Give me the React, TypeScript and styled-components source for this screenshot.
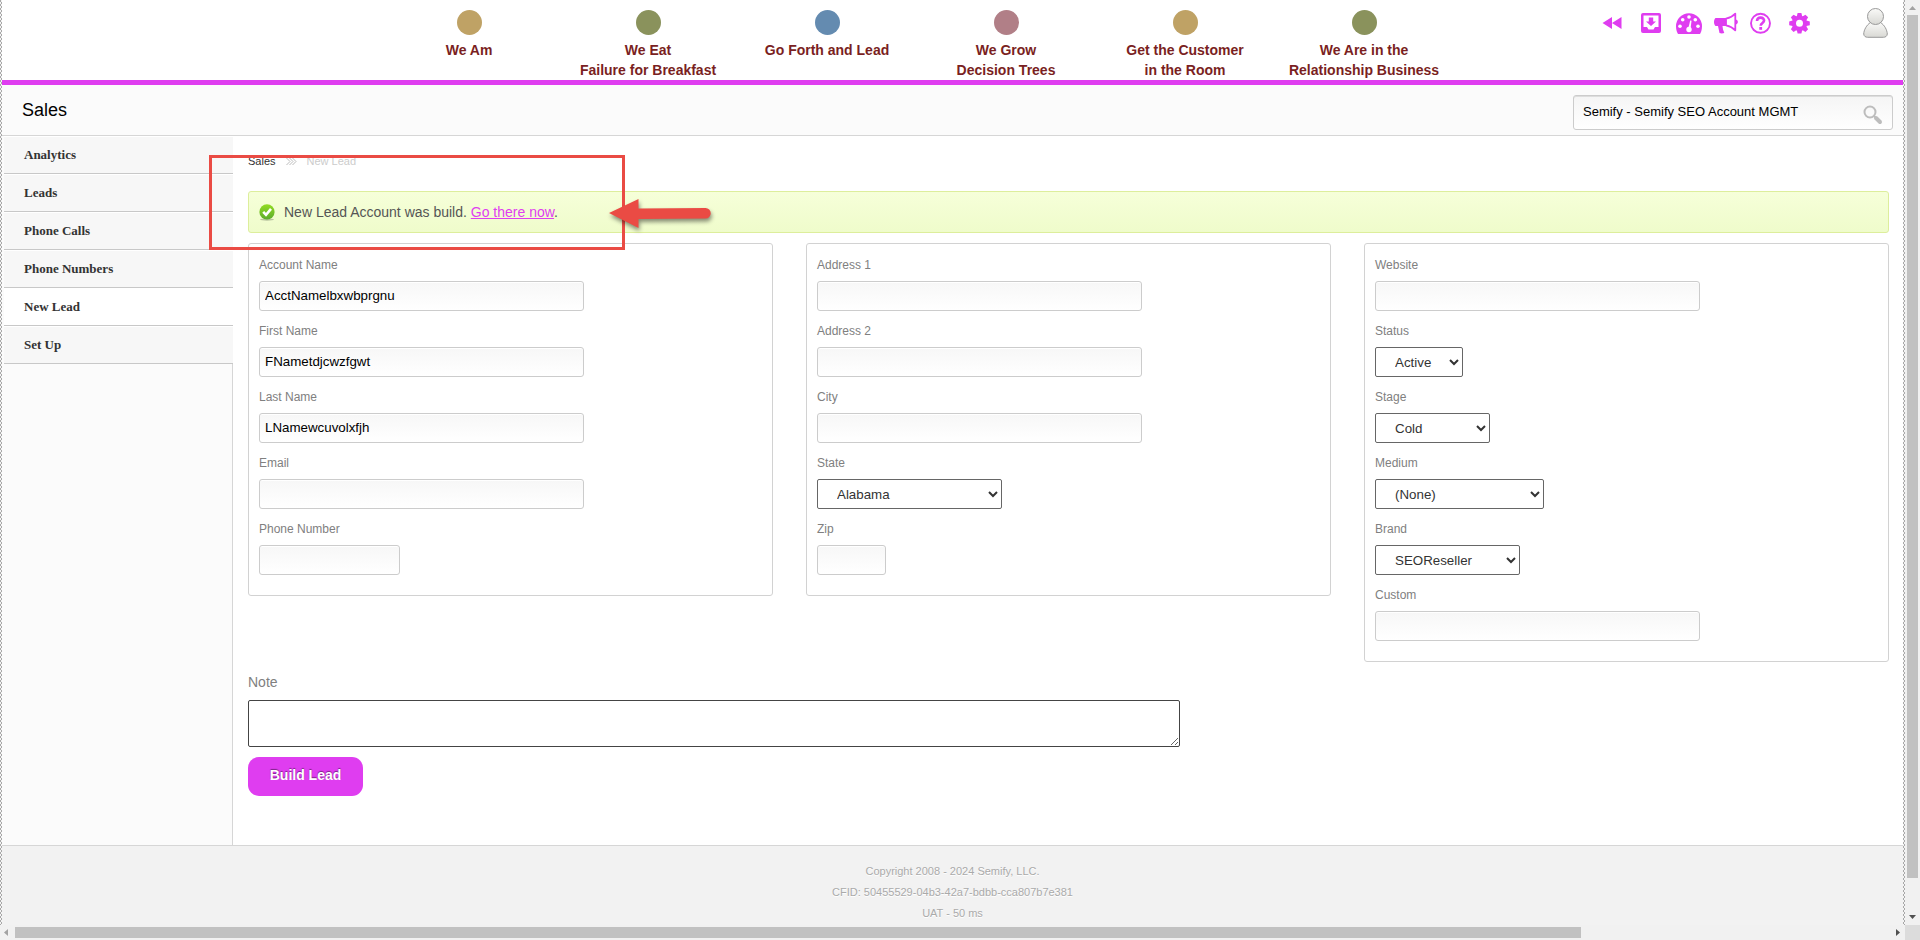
import React from "react";
import styled, { createGlobalStyle } from "styled-components";

const ACCENT = "#df3df0";
const SANS = `"Liberation Sans", Arial, Helvetica, sans-serif`;
const SERIF = `"Liberation Serif", "Times New Roman", serif`;

const GlobalStyle = createGlobalStyle`
  *, *::before, *::after { box-sizing: border-box; }
  body { margin: 0; font-family: ${SANS}; background: #fff; color: #333; }
  ul, p, h1 { margin: 0; padding: 0; }
`;

const Window = styled.div`
  position: relative;
  display: grid;
  grid-template-columns: minmax(0, 1fr) 15px;
  grid-template-rows: minmax(0, 1fr) 15px;
  min-height: 100vh;
`;

const Canvas = styled.div`
  display: flex;
  padding: 0 2px;
  background: repeating-conic-gradient(#f4f4f4 0 25%, #a8a8a8 0 50%) 0 0 / 2px 4px;
`;

const Page = styled.div`
  display: flex;
  flex: 1;
  min-width: 0;
  flex-direction: column;
  background: #fff;
`;

/* Header */

const Header = styled.header`
  display: grid;
  grid-template-columns: 21fr 1074px 25fr;
  height: 85px;
  border-bottom: 5px solid ${ACCENT};
`;

const ValueList = styled.ul`
  grid-column: 2;
  display: grid;
  grid-template-columns: repeat(6, 1fr);
  padding-top: 10px;
  list-style: none;
`;

const ValueItem = styled.li`
  display: flex;
  flex-direction: column;
  align-items: center;
  gap: 5px;
  color: #7a1f22;
  font-size: 14px;
  font-weight: bold;
  line-height: 20px;
  text-align: center;
  white-space: pre-line;
`;

const Dot = styled.span<{ $color: string }>`
  width: 25px;
  height: 25px;
  border-radius: 50%;
  background: ${(p) => p.$color};
`;

const Tools = styled.nav`
  display: flex;
  align-items: flex-start;
  justify-content: flex-end;
  padding: 8px 15px 0 0;
`;

const ToolLink = styled.a<{ $width: number; $gap: number }>`
  display: block;
  width: ${(p) => p.$width}px;
  height: 30px;
  margin-right: ${(p) => p.$gap}px;
  color: ${ACCENT};
  svg { display: block; width: 100%; height: 100%; }
`;

/* Title bar */

const TitleBar = styled.div`
  display: flex;
  align-items: center;
  justify-content: space-between;
  height: 51px;
  padding: 0 10px 0 20px;
  border-bottom: 1px solid #d6d6d6;
  background: #fbfbfb;
`;

const Title = styled.h1`
  color: #000;
  font-size: 18px;
  font-weight: normal;
`;

const SearchBox = styled.div`
  display: flex;
  align-items: flex-start;
  width: 320px;
  height: 35px;
  margin-top: 5px;
  border: 1px solid #ccc;
  border-radius: 3px;
  background: linear-gradient(#f5f5f5, #fff);
  box-shadow: inset 0 1px 0 #ddd;
`;

const SearchInput = styled.input`
  flex: 1;
  min-width: 0;
  height: 30px;
  padding: 0 0 0 9px;
  border: 0;
  outline: 0;
  background: transparent;
  color: #000;
  font-family: ${SANS};
  font-size: 13px;
`;

const SearchButton = styled.button`
  width: 30px;
  height: 32px;
  padding: 5px 9px 0 1px;
  border: 0;
  background: transparent;
  svg { display: block; }
`;

/* Body */

const Body = styled.div`
  display: flex;
  flex: 1;
`;

const Sidebar = styled.aside`
  display: flex;
  flex: 0 0 231px;
  flex-direction: column;
  background: #fbfbfb;
`;

const SideLink = styled.a<{ $active?: boolean }>`
  display: block;
  height: 38px;
  margin-left: 2px;
  padding-left: 20px;
  border-top: 1px solid #fff;
  border-bottom: 1px solid #c8c8c8;
  background: ${(p) => (p.$active ? "#fff" : "#f7f7f7")};
  color: #333;
  font: bold 13px/36px ${SERIF};
  text-decoration: none;
`;

const SideFill = styled.div`
  flex: 1;
  border-right: 1px solid #d6d6d6;
`;

const Main = styled.main`
  flex: 1;
  min-width: 0;
  padding: 15px 14px 49px 15px;
`;

const Crumbs = styled.nav`
  display: flex;
  align-items: center;
  gap: 10px;
  height: 20px;
  margin-bottom: 20px;
  color: #ccc;
  font-size: 11px;
`;

const CrumbLink = styled.a`
  color: #333;
  text-decoration: none;
`;

const Alert = styled.div`
  display: flex;
  align-items: center;
  gap: 9px;
  height: 42px;
  margin-bottom: 10px;
  padding: 0 10px;
  border: 1px solid #ddee9c;
  border-radius: 3px;
  background: linear-gradient(#f6ffd9, #effccb);
  color: #555;
  font-size: 14px;
  a { color: ${ACCENT}; }
`;

const Cards = styled.div`
  display: grid;
  grid-template-columns: repeat(3, minmax(0, 1fr));
  align-items: start;
  gap: 33px;
`;

const Card = styled.fieldset`
  display: flex;
  flex-direction: column;
  gap: 13px;
  min-width: 0;
  margin: 0;
  padding: 14px 10px 20px;
  border: 1px solid #d2d2d2;
  border-radius: 3px;
`;

const Field = styled.div`
  display: flex;
  flex-direction: column;
  align-items: flex-start;
  gap: 9px;
`;

const Label = styled.label`
  color: #808080;
  font-size: 12px;
  line-height: 14px;
`;

const TextBox = styled.input<{ $width: number }>`
  width: ${(p) => p.$width}px;
  max-width: 100%;
  height: 30px;
  padding: 0 5px 1px;
  border: 1px solid #ccc;
  border-radius: 3px;
  background: linear-gradient(#f7f7f7, #fff);
  color: #000;
  font-family: ${SANS};
  box-shadow: inset 0 1px 0 #fff;
`;

const Select = styled.select<{ $width: number }>`
  width: ${(p) => p.$width}px;
  height: 30px;
  padding: 0 0 0 15px;
  border: 1px solid #666;
  border-radius: 2px;
  background: #fff;
  color: #333;
  font-family: ${SANS};
`;

const NoteField = styled.div`
  display: flex;
  flex-direction: column;
  gap: 10px;
  margin: 12px 0 10px;
`;

const NoteLabel = styled.label`
  color: #808080;
  font-size: 14px;
  line-height: 16px;
`;

const NoteBox = styled.textarea`
  width: 932px;
  max-width: 100%;
  height: 47px;
  border: 1px solid #444;
  border-radius: 2px;
  background: #fff;
`;

const BuildButton = styled.button`
  display: block;
  width: 115px;
  height: 39px;
  padding: 0 0 3px;
  border: 0;
  border-radius: 11px;
  background: ${ACCENT};
  color: #fff;
  font: bold 14px ${SANS};
  text-shadow: 0 -1px 1px rgba(0, 0, 0, 0.45);
`;

const Footer = styled.footer`
  height: 80px;
  padding-top: 15px;
  border-top: 1px solid #d6d6d6;
  background: #f2f2f2;
  color: #aaa;
  font-size: 11px;
  line-height: 21px;
  text-align: center;
  text-shadow: 0 1px 0 #fff;
`;

/* Scroll bars around the page */

const ScrollTrack = styled.div<{ $vertical?: boolean }>`
  display: flex;
  flex-direction: ${(p) => (p.$vertical ? "column" : "row")};
  background: #f1f1f1;
`;

const ScrollArrow = styled.span`
  display: grid;
  place-items: center;
  width: 15px;
  height: 15px;
`;

const Thumb = styled.span<{ $grow: number }>`
  flex: ${(p) => p.$grow};
  margin: ${(p) => (p.$grow > 900 ? "0 2px" : "2px 0")};
  background: #c1c1c1;
`;

const TrackRest = styled.span<{ $grow: number }>`
  flex: ${(p) => p.$grow};
`;

const Corner = styled.div`
  background: #dcdcdc;
`;

/* Mark-up drawn over the page */

const Highlight = styled.div`
  position: absolute;
  top: 155px;
  left: 209px;
  width: 416px;
  height: 95px;
  border: 3px solid #ea4b44;
  pointer-events: none;
`;

const Pointer = styled.svg`
  position: absolute;
  top: 195px;
  left: 605px;
  pointer-events: none;
  filter: drop-shadow(1px 3px 2px rgba(0, 0, 0, 0.45));
`;

const RewindIcon = () => (
  <svg viewBox="0 0 20 30" fill="currentColor">
    <path d="M10 9v12L.5 15zM19.500 9v12L10 15z" />
  </svg>
);

const InboxIcon = () => (
  <svg viewBox="0 0 20 30" fill="currentColor">
    <path
      fillRule="evenodd"
      d="M2 5h16a2 2 0 0 1 2 2v16a2 2 0 0 1-2 2H2a2 2 0 0 1-2-2V7a2 2 0 0 1 2-2zM2.500 7.500V19H6l1.500 2.500h5L14 19h3.500V7.500z"
    />
    <path d="M7.800 9.500h4.400v4H15L10 18l-5-4.500h2.800z" />
  </svg>
);

const GaugeIcon = () => (
  <svg viewBox="0 0 26 30">
    <path fill="currentColor" d="M2 26C.6 23.500 0 21 0 18.200a13 13 0 0 1 26 0c0 2.800-.6 5.300-2 7.800z" />
    <g fill="#fff">
      <circle cx="4" cy="18.200" r="1.800" />
      <circle cx="6.700" cy="11.800" r="1.800" />
      <circle cx="13" cy="9" r="1.800" />
      <circle cx="19.300" cy="11.800" r="1.800" />
      <circle cx="22" cy="18.200" r="1.800" />
      <circle cx="13" cy="21.500" r="2.700" />
      <path d="M12.300 20.500l1.900-8 1.300.3-1 8.400z" />
    </g>
  </svg>
);

const HornIcon = () => (
  <svg viewBox="0 0 24 30">
    <path
      fill="currentColor"
      d="M1.500 10H12v8H8.500l.5 3.500 1.300 3.500c-1.800.6-3.500.5-4.800 0L4 18H1.500C.5 17 0 15.700 0 14s.5-3 1.500-4z"
    />
    <path fill="none" stroke="currentColor" strokeWidth="1.800" strokeLinejoin="round" d="M12 10.700c4-.8 7-2.400 9.300-5v16.600c-2.300-2.600-5.300-4.200-9.300-5z" />
    <path fill="currentColor" d="M21.500 11.500c1.600.3 2.300 1.200 2.300 2.500s-.7 2.200-2.300 2.500z" />
  </svg>
);

const HelpIcon = () => (
  <svg viewBox="0 0 21 30" fill="none" stroke="currentColor">
    <circle cx="10.500" cy="15.300" r="9.500" strokeWidth="1.900" />
    <path strokeWidth="2.600" d="M7 13c0-2 1.400-3.400 3.600-3.400s3.500 1.200 3.500 3c0 2.400-3.400 2.500-3.400 5.200" />
    <path strokeWidth="2.800" d="M10.700 19v2.800" />
  </svg>
);

const GearIcon = () => (
  <svg viewBox="0 0 21 30" fill="currentColor">
    {[0, 45, 90, 135].map((angle) => (
      <path key={angle} transform={`rotate(${angle} 10.500 15.300)`} d="M8.600 5h3.800l.8 3.500v13.600l-.8 3.500H8.600l-.8-3.500V8.500z" />
    ))}
    <circle cx="10.500" cy="15.300" r="7.600" />
    <circle cx="10.500" cy="15.300" r="3.500" fill="#fff" />
  </svg>
);

const AvatarIcon = () => (
  <svg viewBox="0 0 25 30">
    <defs>
      <linearGradient id="figure" x1="0" y1="0" x2="0" y2="1">
        <stop offset="0" stopColor="#fafaf8" />
        <stop offset="1" stopColor="#d8d8d4" />
      </linearGradient>
    </defs>
    <path fill="url(#figure)" stroke="#999" d="M7.500 14.500h10c4 2.500 6.600 7.500 6.800 11.500-.3 2.300-1.800 3.300-4 3.300H4.700c-2.200 0-3.700-1-4-3.300.2-4 2.800-9 6.800-11.500z" />
    <circle cx="12.500" cy="8.500" r="8" fill="url(#figure)" stroke="#999" />
  </svg>
);

const tools = [
  { name: "Back", Icon: RewindIcon, width: 20, gap: 19 },
  { name: "Inbox", Icon: InboxIcon, width: 20, gap: 15 },
  { name: "Dashboard", Icon: GaugeIcon, width: 26, gap: 12 },
  { name: "Announcements", Icon: HornIcon, width: 24, gap: 12 },
  { name: "Help", Icon: HelpIcon, width: 21, gap: 18 },
  { name: "Settings", Icon: GearIcon, width: 21, gap: 53 },
  { name: "Profile", Icon: AvatarIcon, width: 25, gap: 0 },
];

const values = [
  { text: "We Am", color: "#bfa265" },
  { text: "We Eat\nFailure for Breakfast", color: "#8a925c" },
  { text: "Go Forth and Lead", color: "#648bb0" },
  { text: "We Grow\nDecision Trees", color: "#b17f87" },
  { text: "Get the Customer\nin the Room", color: "#bfa265" },
  { text: "We Are in the\nRelationship Business", color: "#8a925c" },
];

const sections = ["Analytics", "Leads", "Phone Calls", "Phone Numbers", "New Lead", "Set Up"];

type FieldSpec = { label: string; width: number; value?: string; options?: string[] };

const columns: FieldSpec[][] = [
  [
    { label: "Account Name", width: 325, value: "AcctNamelbxwbprgnu" },
    { label: "First Name", width: 325, value: "FNametdjcwzfgwt" },
    { label: "Last Name", width: 325, value: "LNamewcuvolxfjh" },
    { label: "Email", width: 325 },
    { label: "Phone Number", width: 141 },
  ],
  [
    { label: "Address 1", width: 325 },
    { label: "Address 2", width: 325 },
    { label: "City", width: 325 },
    { label: "State", width: 185, options: ["Alabama"] },
    { label: "Zip", width: 69 },
  ],
  [
    { label: "Website", width: 325 },
    { label: "Status", width: 88, options: ["Active"] },
    { label: "Stage", width: 115, options: ["Cold"] },
    { label: "Medium", width: 169, options: ["(None)"] },
    { label: "Brand", width: 145, options: ["SEOReseller"] },
    { label: "Custom", width: 325 },
  ],
];

const FormField = ({ label, width, value, options }: FieldSpec) => {
  const id = label.toLowerCase().replace(/ /g, "-");
  return (
    <Field>
      <Label htmlFor={id}>{label}</Label>
      {options ? (
        <Select id={id} $width={width}>
          {options.map((o) => (
            <option key={o}>{o}</option>
          ))}
        </Select>
      ) : (
        <TextBox id={id} type="text" $width={width} defaultValue={value} />
      )}
    </Field>
  );
};

const Arrow = ({ d, color }: { d: string; color: string }) => (
  <ScrollArrow>
    <svg width="15" height="15" fill={color}>
      <path d={d} />
    </svg>
  </ScrollArrow>
);

export default function App() {
  return (
    <>
      <GlobalStyle />
      <Window>
        <Canvas>
          <Page>
            <Header>
              <ValueList>
                {values.map((v) => (
                  <ValueItem key={v.text}>
                    <Dot $color={v.color} />
                    <span>{v.text}</span>
                  </ValueItem>
                ))}
              </ValueList>
              <Tools>
                {tools.map(({ name, Icon, width, gap }) => (
                  <ToolLink key={name} href="#" aria-label={name} $width={width} $gap={gap}>
                    <Icon />
                  </ToolLink>
                ))}
              </Tools>
            </Header>
            <TitleBar>
              <Title>Sales</Title>
              <SearchBox>
                <SearchInput type="text" aria-label="Account" defaultValue="Semify - Semify SEO Account MGMT" />
                <SearchButton aria-label="Search">
                  <svg width="20" height="20" fill="none" stroke="#bdbdbd">
                    <circle cx="7" cy="7" r="5.500" strokeWidth="2" />
                    <path d="M11 11l2 2" strokeWidth="2" />
                    <path d="M13 13l4 4" strokeWidth="4" strokeLinecap="round" />
                  </svg>
                </SearchButton>
              </SearchBox>
            </TitleBar>
            <Body>
              <Sidebar>
                <nav aria-label="Sections">
                  {sections.map((s) => (
                    <SideLink key={s} href="#" $active={s === "New Lead"}>
                      {s}
                    </SideLink>
                  ))}
                </nav>
                <SideFill />
              </Sidebar>
              <Main>
                <Crumbs aria-label="Breadcrumb">
                  <CrumbLink href="#">Sales</CrumbLink>
                  <svg width="11" height="9" fill="none" stroke="#bbb" aria-hidden="true">
                    <path d="M.5 1L4 4.500.5 8M3.500 1L7 4.500 3.500 8M6.500 1L10 4.500 6.500 8" />
                  </svg>
                  <span>New Lead</span>
                </Crumbs>
                <Alert role="status">
                  <svg width="16" height="17" aria-hidden="true">
                    <defs>
                      <linearGradient id="ok" x1="0" y1="0" x2="0" y2="1">
                        <stop offset="0" stopColor="#92dc22" />
                        <stop offset="1" stopColor="#5cab2e" />
                      </linearGradient>
                    </defs>
                    <ellipse cx="8" cy="15.500" rx="7" ry="1.200" fill="#b9c59f" />
                    <circle cx="8" cy="7.900" r="7.600" fill="url(#ok)" />
                    <path d="M4.200 7.800l2.800 3 5-6" fill="none" stroke="#fff" strokeWidth="2.600" />
                  </svg>
                  <span>
                    New Lead Account was build. <a href="#">Go there now</a>.
                  </span>
                </Alert>
                <form onSubmit={(e) => e.preventDefault()}>
                  <Cards>
                    {columns.map((fields) => (
                      <Card key={fields[0].label}>
                        {fields.map((f) => (
                          <FormField key={f.label} {...f} />
                        ))}
                      </Card>
                    ))}
                  </Cards>
                  <NoteField>
                    <NoteLabel htmlFor="note">Note</NoteLabel>
                    <NoteBox id="note" />
                  </NoteField>
                  <BuildButton type="submit">Build Lead</BuildButton>
                </form>
              </Main>
            </Body>
            <Footer>
              <p>Copyright 2008 - 2024 Semify, LLC.</p>
              <p>CFID: 50455529-04b3-42a7-bdbb-cca807b7e381</p>
              <p>UAT - 50 ms</p>
            </Footer>
          </Page>
        </Canvas>
        <ScrollTrack $vertical aria-hidden="true">
          <Arrow d="M4 10l3.500-4L11 10z" color="#a3a3a3" />
          <Thumb $grow={964} />
          <TrackRest $grow={36} />
          <Arrow d="M4 5l3.500 4L11 5z" color="#505050" />
        </ScrollTrack>
        <ScrollTrack aria-hidden="true">
          <Arrow d="M8 4L4 7.500 8 11z" color="#a3a3a3" />
          <Thumb $grow={835} />
          <TrackRest $grow={165} />
          <Arrow d="M6 4l4 3.500L6 11z" color="#505050" />
        </ScrollTrack>
        <Corner />
        <Highlight />
        <Pointer width="112" height="40" fill="#ea4b44" aria-hidden="true">
          <path d="M4 18L33.500 4v9.500l67-.5a5 5 0 0 1 0 10.500l-67 .5v9z" />
        </Pointer>
      </Window>
    </>
  );
}
